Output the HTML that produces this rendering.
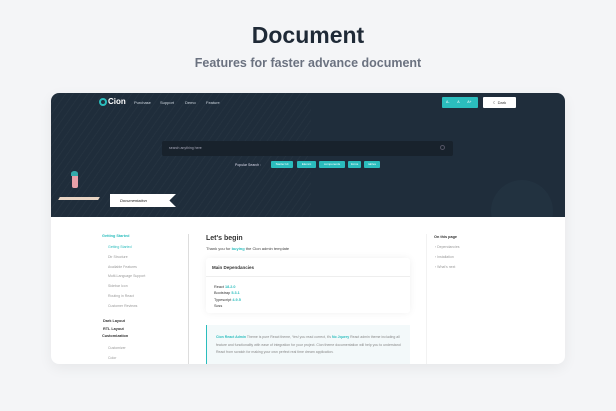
<!DOCTYPE html>
<html><head><style>
*{margin:0;padding:0;box-sizing:border-box}
body{width:616px;height:411px;background:#f4f5f7;font-family:"Liberation Sans",sans-serif;position:relative;overflow:hidden}
.a{position:absolute}
h1{position:absolute;left:0;width:616px;top:22px;text-align:center;font-size:23px;font-weight:bold;color:#1f2a37}
.sub{position:absolute;left:0;width:616px;top:56px;text-align:center;font-size:12.5px;font-weight:bold;color:#6b7280}
.card{position:absolute;left:51px;top:93px;width:514px;height:271px;background:#fff;border-radius:8px;overflow:hidden;box-shadow:0 4px 14px rgba(0,0,0,.06)}
.hd{position:absolute;left:0;top:0;width:514px;height:124px;background:#1f2d3b;overflow:hidden}
.st{position:absolute;left:0;top:0;width:260px;height:124px;background-image:repeating-linear-gradient(125deg,rgba(255,255,255,0.025) 0 1px,transparent 1px 6px)}
.t{font-size:4px;color:#cfd8e0}
.tag{position:absolute;top:68px;height:7px;background:#2bbdbd;border-radius:1px;font-size:3px;color:#fff;text-align:center;line-height:7px}
.s{font-size:3.5px;color:#999;position:absolute}
</style></head><body>
<h1>Document</h1>
<div class="sub">Features for faster advance document</div>
<div class="card">
 <div class="hd">
  <div class="st"></div>
  <div class="a" style="left:48px;top:5px;width:8px;height:8px;border:2px solid #2bbdbd;border-radius:50%"></div>
  <div class="a" style="left:57px;top:4px;font-size:8px;font-weight:bold;color:#fff">Cion</div>
  <div class="a t" style="left:83px;top:7px">Purchase</div>
  <div class="a t" style="left:109px;top:7px">Support</div>
  <div class="a t" style="left:134px;top:7px">Demo</div>
  <div class="a t" style="left:155px;top:7px">Feature</div>
  <div class="a" style="left:391px;top:4px;width:36px;height:11px;background:#2bbdbd;border-radius:1px;font-size:3.5px;color:#fff;line-height:11px;word-spacing:7px;padding-left:4px">A- A A+</div>
  <div class="a" style="left:432px;top:4px;width:33px;height:11px;background:#fff;border-radius:1px;font-size:4px;color:#333;line-height:11px;text-align:center">☾ Dark</div>
  <div class="a" style="left:111px;top:48px;width:291px;height:15px;background:#18222c;border-radius:2px"></div>
  <div class="a" style="left:118px;top:53px;font-size:3.5px;color:#aab">search anything here</div>
  <div class="a" style="left:389px;top:52px;width:5px;height:5px;border:1px solid #556;border-radius:50%"></div>
  <div class="a" style="left:184px;top:70px;font-size:3.5px;color:#dde">Popular Search :</div>
  <div class="tag" style="left:220px;width:22px">Starter kit</div>
  <div class="tag" style="left:246px;width:19px">Elemnt</div>
  <div class="tag" style="left:268px;width:26px">components</div>
  <div class="tag" style="left:297px;width:13px">forms</div>
  <div class="tag" style="left:313px;width:16px">tables</div>
  <div class="a" style="left:21px;top:81px;width:6px;height:14px;background:#e8a0a8;border-radius:2px"></div>
  <div class="a" style="left:20px;top:78px;width:7px;height:5px;background:#3aa;border-radius:50% 50% 0 0"></div>
  <div class="a" style="left:8px;top:104px;width:40px;height:3px;background:#e9d5c4;transform:skewX(-30deg)"></div>
  <div class="a" style="left:59px;top:101px;width:66px;height:13px;background:#fff;clip-path:polygon(0 0,100% 0,90% 50%,100% 100%,0 100%);font-size:4px;color:#222;line-height:13px;padding-left:10px;font-style:italic">Documentation</div>
  <div class="a" style="left:440px;top:87px;width:62px;height:62px;border-radius:50%;background:#223240"></div>
 </div>
 <div class="a" style="left:51px;top:141px;font-size:3.8px;color:#2bbdbd;font-weight:bold">Getting Started</div>
 <div class="s" style="left:57px;top:152px;color:#2bbdbd">Getting Started</div>
 <div class="s" style="left:57px;top:162px">Dir Structure</div>
 <div class="s" style="left:57px;top:172px">Available Features</div>
 <div class="s" style="left:57px;top:181px">Multi-Language Support</div>
 <div class="s" style="left:57px;top:191px">Sidebar Icon</div>
 <div class="s" style="left:57px;top:201px">Routing in React</div>
 <div class="s" style="left:57px;top:211px">Customer Reviews</div>
 <div class="a" style="left:52px;top:225px;font-size:3.8px;font-weight:bold;color:#333;line-height:7.5px">Dark Layout<br>RTL Layout</div>
 <div class="a" style="left:51px;top:241px;font-size:3.8px;font-weight:bold;color:#333">Customization</div>
 <div class="s" style="left:57px;top:253px">Customizer</div>
 <div class="s" style="left:57px;top:263px">Color</div>
 <div class="a" style="left:137px;top:141px;width:1px;height:130px;background:#ddd"></div>
 <div class="a" style="left:375px;top:141px;width:1px;height:130px;background:#f2f2f2"></div>
 <div class="a" style="left:155px;top:142px;font-size:7px;font-weight:bold;color:#333">Let's begin</div>
 <div class="a" style="left:155px;top:153px;font-size:4px;color:#444">Thank you for <b style="color:#2bbdbd">buying</b> the Cion admin template</div>
 <div class="a" style="left:155px;top:165px;width:204px;height:55px;background:#fff;box-shadow:0 0 8px rgba(0,0,0,.06);border-radius:3px">
  <div class="a" style="left:6px;top:7px;font-size:4.5px;font-weight:bold;color:#333">Main Dependancies</div>
  <div class="a" style="left:0;top:18px;width:204px;height:1px;background:#eee"></div>
  <div class="a" style="left:8px;top:26px;font-size:3.8px;color:#333;line-height:6.3px">React <b style="color:#2bbdbd">18.2.0</b><br>Bootstrap <b style="color:#2bbdbd">5.3.1</b><br>Typescript <b style="color:#2bbdbd">4.9.5</b><br>Scss</div>
 </div>
 <div class="a" style="left:155px;top:232px;width:204px;height:40px;background:#f3f9fa;border-left:1px solid #2bbdbd;font-size:3.5px;color:#888;line-height:7.5px;padding:9px 8px 0 9px"><b style="color:#2bbdbd">Cion React Admin</b> Theme is pure React theme, Yes! you read correct, it's <b style="color:#2bbdbd">No Jquery</b> React admin theme including all feature and functionality with ease of integration for your project. Cion theme documentation will help you to understand React from scratch for making your own perfect real time dream application.</div>
 <div class="a" style="left:383px;top:142px;font-size:3.8px;font-weight:bold;color:#333">On this page</div>
 <div class="s" style="left:384px;top:152px">› Dependancies</div>
 <div class="s" style="left:384px;top:162px">› Installation</div>
 <div class="s" style="left:384px;top:172px">› What's next</div>
</div>
</body></html>
